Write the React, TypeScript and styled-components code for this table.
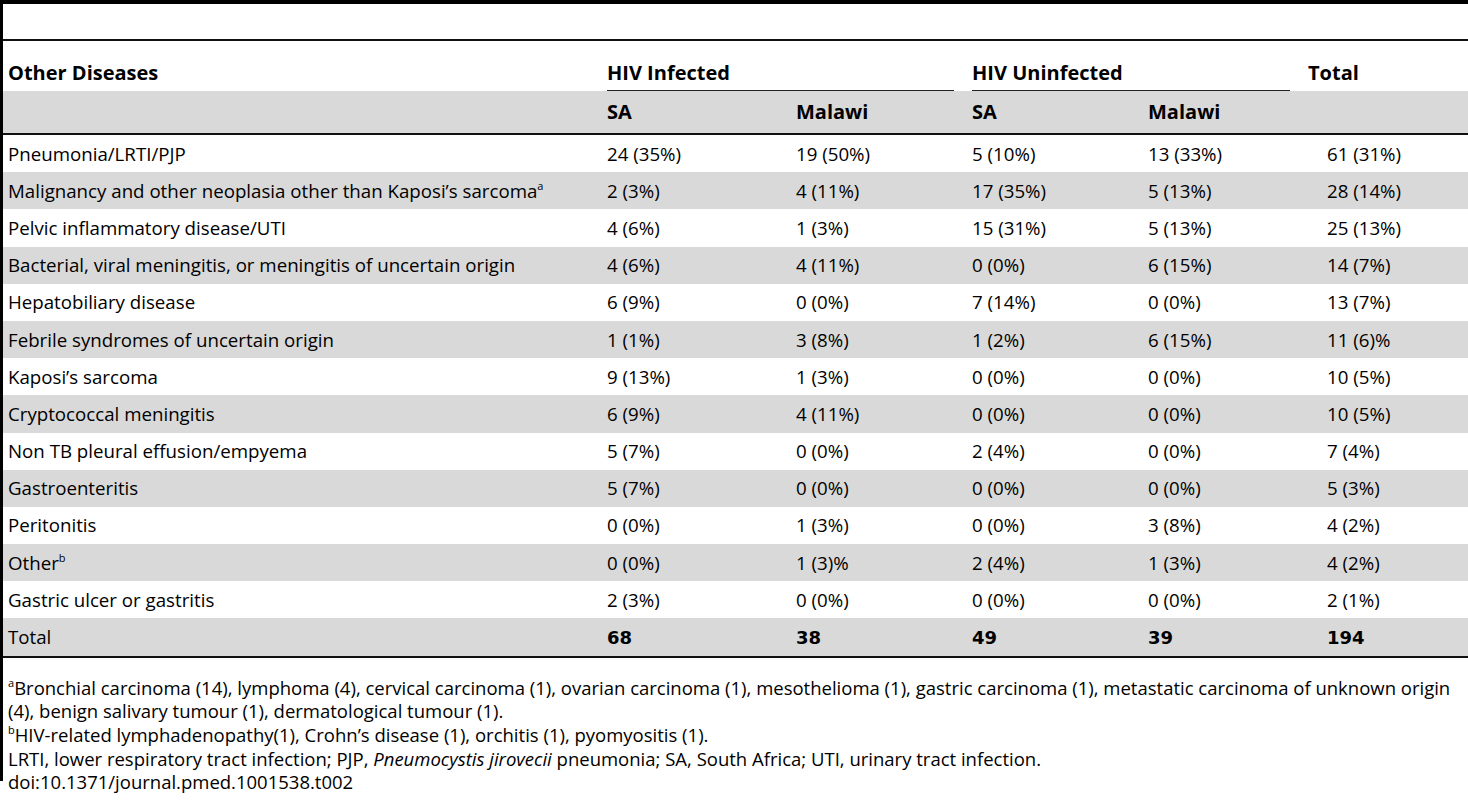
import React from 'react'
import styled, { createGlobalStyle } from 'styled-components'

const GlobalStyle = createGlobalStyle`
  html, body {
    margin: 0;
    padding: 0;
    background: #ffffff;
  }

  body {
    font-family: 'Open Sans', 'Noto Sans', Arial, sans-serif;
    color: #000000;
  }
`

// left rule stops partway through the doi line, as in the source page
const Frame = styled.div`
  position: relative;
  box-sizing: border-box;
  width: 1468px;
  border-top: 4px solid #000;
  padding: 35px 0 0 3px;

  &::before {
    content: '';
    position: absolute;
    left: 0;
    top: -4px;
    width: 3px;
    height: 781px;
    background: #000;
  }
`

const Table = styled.table`
  width: 1465px;
  table-layout: fixed;
  border-collapse: separate;
  border-spacing: 0;
  border-top: 2px solid #111;
  font-size: 18.7px;
`

const HeadRow = styled.tr<{ $shade?: boolean }>`
  background: ${p => (p.$shade ? '#d9d9d9' : 'transparent')};
`

const HeadCell = styled.th<{ $first?: boolean }>`
  height: 50px;
  padding: 0 9px 0 ${p => (p.$first ? '5px' : '9px')};
  text-align: left;
  vertical-align: bottom;
  font-weight: 700;
  font-size: 20px;
`

const HeadLabel = styled.div<{ $rule?: boolean }>`
  line-height: 24px;
  padding-bottom: 5px;
  border-bottom: 1.5px solid ${p => (p.$rule ? '#222' : 'transparent')};
`

const SubCell = styled.th<{ $first?: boolean }>`
  height: 42px;
  padding: 0 9px 0 ${p => (p.$first ? '5px' : '9px')};
  text-align: left;
  vertical-align: middle;
  font-weight: 700;
  font-size: 20px;
  line-height: 24px;
  border-bottom: 2px solid #111;
`

const Row = styled.tr<{ $shade: boolean }>`
  background: ${p => (p.$shade ? '#d9d9d9' : 'transparent')};
`

const Cell = styled.td<{ $first?: boolean; $indent?: number; $last?: boolean }>`
  height: 37.2px;
  padding: 0 9px 0 ${p => (p.$first ? 5 : p.$indent ?? 9)}px;
  vertical-align: middle;
  line-height: 24px;
  white-space: nowrap;
  border-bottom: ${p => (p.$last ? '2px solid #111' : 'none')};
`

const Count = styled.span`
  font-family: 'DejaVu Sans', 'Open Sans', sans-serif;
  font-weight: 700;
  font-size: 18px;
`

const Sup = styled.sup`
  font-size: 11px;
  line-height: 0;
  vertical-align: 8px;
`

const Notes = styled.div`
  margin-top: 18px;
  padding-left: 5px;
  font-size: 18.5px;
  line-height: 23.7px;
`

const Note = styled.div``

type Line = [React.ReactNode, string, string, string, string, string]

const rows: Line[] = [
  ['Pneumonia/LRTI/PJP', '24 (35%)', '19 (50%)', '5 (10%)', '13 (33%)', '61 (31%)'],
  [
    <>Malignancy and other neoplasia other than Kaposi’s sarcoma<Sup>a</Sup></>,
    '2 (3%)', '4 (11%)', '17 (35%)', '5 (13%)', '28 (14%)',
  ],
  ['Pelvic inflammatory disease/UTI', '4 (6%)', '1 (3%)', '15 (31%)', '5 (13%)', '25 (13%)'],
  ['Bacterial, viral meningitis, or meningitis of uncertain origin', '4 (6%)', '4 (11%)', '0 (0%)', '6 (15%)', '14 (7%)'],
  ['Hepatobiliary disease', '6 (9%)', '0 (0%)', '7 (14%)', '0 (0%)', '13 (7%)'],
  ['Febrile syndromes of uncertain origin', '1 (1%)', '3 (8%)', '1 (2%)', '6 (15%)', '11 (6)%'],
  ['Kaposi’s sarcoma', '9 (13%)', '1 (3%)', '0 (0%)', '0 (0%)', '10 (5%)'],
  ['Cryptococcal meningitis', '6 (9%)', '4 (11%)', '0 (0%)', '0 (0%)', '10 (5%)'],
  ['Non TB pleural effusion/empyema', '5 (7%)', '0 (0%)', '2 (4%)', '0 (0%)', '7 (4%)'],
  ['Gastroenteritis', '5 (7%)', '0 (0%)', '0 (0%)', '0 (0%)', '5 (3%)'],
  ['Peritonitis', '0 (0%)', '1 (3%)', '0 (0%)', '3 (8%)', '4 (2%)'],
  [<>Other<Sup>b</Sup></>, '0 (0%)', '1 (3)%', '2 (4%)', '1 (3%)', '4 (2%)'],
  ['Gastric ulcer or gastritis', '2 (3%)', '0 (0%)', '0 (0%)', '0 (0%)', '2 (1%)'],
]

const totals = ['68', '38', '49', '39', '194']

export default function App() {
  return (
    <>
      <GlobalStyle />
      <Frame>
        <Table>
          <colgroup>
            <col style={{ width: 595 }} />
            <col style={{ width: 189 }} />
            <col style={{ width: 176 }} />
            <col style={{ width: 176 }} />
            <col style={{ width: 160 }} />
            <col style={{ width: 169 }} />
          </colgroup>
          <thead>
            <HeadRow>
              <HeadCell $first>
                <HeadLabel>Other Diseases</HeadLabel>
              </HeadCell>
              <HeadCell colSpan={2}>
                <HeadLabel $rule>HIV Infected</HeadLabel>
              </HeadCell>
              <HeadCell colSpan={2}>
                <HeadLabel $rule>HIV Uninfected</HeadLabel>
              </HeadCell>
              <HeadCell>
                <HeadLabel>Total</HeadLabel>
              </HeadCell>
            </HeadRow>
            <HeadRow $shade>
              <SubCell $first />
              <SubCell>SA</SubCell>
              <SubCell>Malawi</SubCell>
              <SubCell>SA</SubCell>
              <SubCell>Malawi</SubCell>
              <SubCell />
            </HeadRow>
          </thead>
          <tbody>
            {rows.map((r, i) => (
              <Row key={i} $shade={i % 2 === 1}>
                <Cell $first>{r[0]}</Cell>
                <Cell>{r[1]}</Cell>
                <Cell>{r[2]}</Cell>
                <Cell>{r[3]}</Cell>
                <Cell>{r[4]}</Cell>
                <Cell $indent={28}>{r[5]}</Cell>
              </Row>
            ))}
            <Row $shade>
              <Cell $first $last>Total</Cell>
              {totals.map((t, i) => (
                <Cell key={t} $last $indent={i === 4 ? 28 : 9}>
                  <Count>{t}</Count>
                </Cell>
              ))}
            </Row>
          </tbody>
        </Table>
        <Notes>
          <Note>
            <Sup>a</Sup>Bronchial carcinoma (14), lymphoma (4), cervical carcinoma (1), ovarian carcinoma (1),
            mesothelioma (1), gastric carcinoma (1), metastatic carcinoma of unknown origin (4), benign salivary
            tumour (1), dermatological tumour (1).
          </Note>
          <Note>
            <Sup>b</Sup>HIV-related lymphadenopathy(1), Crohn’s disease (1), orchitis (1), pyomyositis (1).
          </Note>
          <Note>
            LRTI, lower respiratory tract infection; PJP, <i>Pneumocystis jirovecii</i> pneumonia; SA, South Africa;
            UTI, urinary tract infection.
          </Note>
          <Note>doi:10.1371/journal.pmed.1001538.t002</Note>
        </Notes>
      </Frame>
    </>
  )
}
